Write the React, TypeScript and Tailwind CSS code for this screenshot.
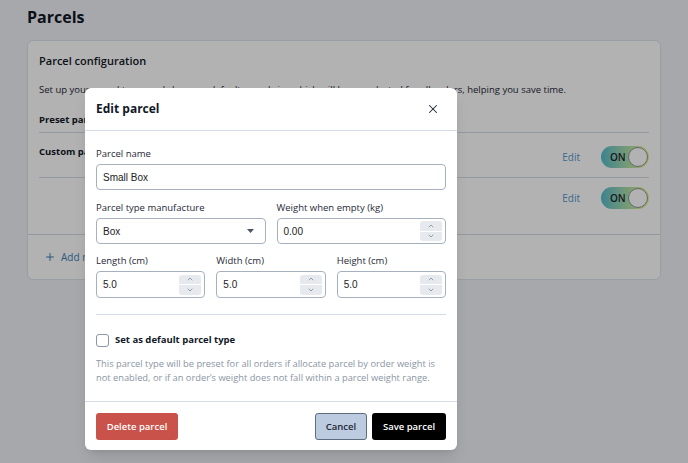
import { X, ChevronUp, ChevronDown, Plus } from 'lucide-react';

const sans = { fontFamily: '"Open Sans", "Noto Sans", sans-serif' };
const arial = { fontFamily: '"Liberation Sans", Arial, sans-serif' };

function Spinner() {
  return (
    <div className="flex flex-col gap-px">
      <div className="flex h-[9.5px] w-[22px] items-center justify-center rounded-t-[3px] bg-[#e6e9ee] text-[#6b7785]">
        <ChevronUp size={8} strokeWidth={2} />
      </div>
      <div className="flex h-[9.5px] w-[22px] items-center justify-center rounded-b-[3px] bg-[#e6e9ee] text-[#6b7785]">
        <ChevronDown size={8} strokeWidth={2} />
      </div>
    </div>
  );
}

function NumberField({ label, value, height = 'h-[27px]' }: { label: string; value: string; height?: string }) {
  return (
    <div className="flex-1">
      <div className="mb-px text-[9.5px] font-medium leading-[18px] text-[#1f2937]">{label}</div>
      <div className={`flex ${height} items-center justify-between rounded-[4px] border border-[#a6b1bf] pl-[6px] pr-[3px]`}>
        <span className="text-[10px] text-[#222]" style={arial}>
          {value}
        </span>
        <Spinner />
      </div>
    </div>
  );
}

function Toggle() {
  return (
    <div className="flex h-[22px] w-[48px] items-center justify-between rounded-full bg-gradient-to-r from-[#54bccc] to-[#e9f67a] pl-[9px] pr-[1px]">
      <span className="text-[10px] font-semibold text-[#1d2430]">ON</span>
      <div className="h-[20px] w-[20px] rounded-full border border-[#8c96a0] bg-white" />
    </div>
  );
}

export default function App() {
  return (
    <div className="relative h-[463px] w-[688px] overflow-hidden bg-[#eff1f5]" style={sans}>
      {/* Page */}
      <div className="px-[27px] pt-[6px]">
        <h1 className="text-[16px] font-bold leading-[22px] text-[#111827]">Parcels</h1>
        <div className="mt-[12px] rounded-md border border-[#dde2ea] bg-white">
          <div className="px-[11px] pt-[12px]">
            <h2 className="text-[11px] font-semibold leading-[16px] text-[#111827]">Parcel configuration</h2>
            <p className="mt-[14px] text-[9.5px] leading-[14px] text-[#1f2937]">
              Set up your parcel types and choose a default parcel size which will be preselected for all orders, helping you save time.
            </p>
            <div className="mt-[16px] border-b border-[#d5dce7] pb-[5px] text-[9.5px] font-bold leading-[14px] text-[#111827]">
              Preset parcels
            </div>
            <div className="flex items-start justify-between border-b border-[#d5dce7] pb-[9px] pt-[12px]">
              <div className="text-[9.5px] font-bold leading-[14px] text-[#111827]">Custom parcels</div>
              <div className="mt-[1px] flex items-center gap-[21px]">
                <span className="text-[10px] font-medium text-[#5497cb]">Edit</span>
                <Toggle />
              </div>
            </div>
            <div className="flex justify-end pb-[25px] pt-[9px]">
              <div className="flex items-center gap-[21px]">
                <span className="text-[10px] font-medium text-[#5497cb]">Edit</span>
                <Toggle />
              </div>
            </div>
          </div>
          <div className="flex h-[45px] items-center gap-[5px] border-t border-[#d5dce7] px-[16px] text-[#3f7fb6]">
            <Plus size={12} strokeWidth={2} />
            <span className="text-[10px] font-medium">Add new parcel</span>
          </div>
        </div>
      </div>

      {/* Overlay */}
      <div className="absolute inset-0 bg-black/30" />

      {/* Modal */}
      <div className="absolute left-[85px] top-[88px] w-[372px] rounded-md bg-white shadow-lg">
        <div className="flex h-[43px] items-center justify-between border-b border-[#d5dce7] pl-[11px] pr-[17px]">
          <h3 className="text-[12px] font-bold text-[#111827]">Edit parcel</h3>
          <X size={14} strokeWidth={1.8} className="text-[#1f2937]" />
        </div>

        <div className="px-[11px] pt-[14px]">
          <div className="mb-px text-[9.5px] font-medium leading-[18px] text-[#1f2937]">Parcel name</div>
          <div className="flex h-[26px] items-center rounded-[4px] border border-[#a6b1bf] px-[6px]">
            <span className="text-[10px] text-[#222]" style={arial}>
              Small Box
            </span>
          </div>

          <div className="mt-[9px] flex gap-[11px]">
            <div className="flex-1">
              <div className="mb-px text-[9.5px] font-medium leading-[18px] text-[#1f2937]">Parcel type manufacture</div>
              <div className="flex h-[26px] items-center justify-between rounded-[4px] border border-[#a6b1bf] pl-[6px] pr-[11px]">
                <span className="text-[10px] text-[#222]" style={arial}>
                  Box
                </span>
                <svg width="7" height="4" viewBox="0 0 7 4">
                  <path d="M0 0h7L3.5 4z" fill="#4b5563" />
                </svg>
              </div>
            </div>
            <NumberField label="Weight when empty (kg)" value="0.00" height="h-[26px]" />
          </div>

          <div className="mt-[8px] flex gap-[11px]">
            <NumberField label="Length (cm)" value="5.0" />
            <NumberField label="Width (cm)" value="5.0" />
            <NumberField label="Height (cm)" value="5.0" />
          </div>

          <div className="mt-[16px] border-t border-[#d5dce7]" />

          <div className="mt-[18px] flex items-center gap-[6px]">
            <div className="h-[13px] w-[13px] rounded-[3px] border-[1.5px] border-[#8796a8]" />
            <span className="text-[9.5px] font-bold text-[#111827]">Set as default parcel type</span>
          </div>
          <p className="mt-[10px] pb-[16px] text-[9.3px] leading-[14px] text-[#8a95a3]">
            This parcel type will be preset for all orders if allocate parcel by order weight is not enabled, or if an order’s weight does not fall within a parcel weight range.
          </p>
        </div>

        <div className="flex items-center justify-between border-t border-[#d5dce7] px-[11px] pb-[10px] pt-[11px]">
          <button className="h-[27px] w-[82px] rounded-[3px] bg-[#c9524a] text-[9.5px] font-semibold text-white">
            Delete parcel
          </button>
          <div className="flex gap-[5px]">
            <button className="h-[27px] w-[52px] rounded-[3px] border border-[#5d6c7e] bg-[#bccbdf] text-[9.5px] font-semibold text-[#1f2937]">
              Cancel
            </button>
            <button className="h-[27px] w-[74px] rounded-[3px] bg-black text-[9.5px] font-semibold text-white">
              Save parcel
            </button>
          </div>
        </div>
      </div>
    </div>
  );
}
